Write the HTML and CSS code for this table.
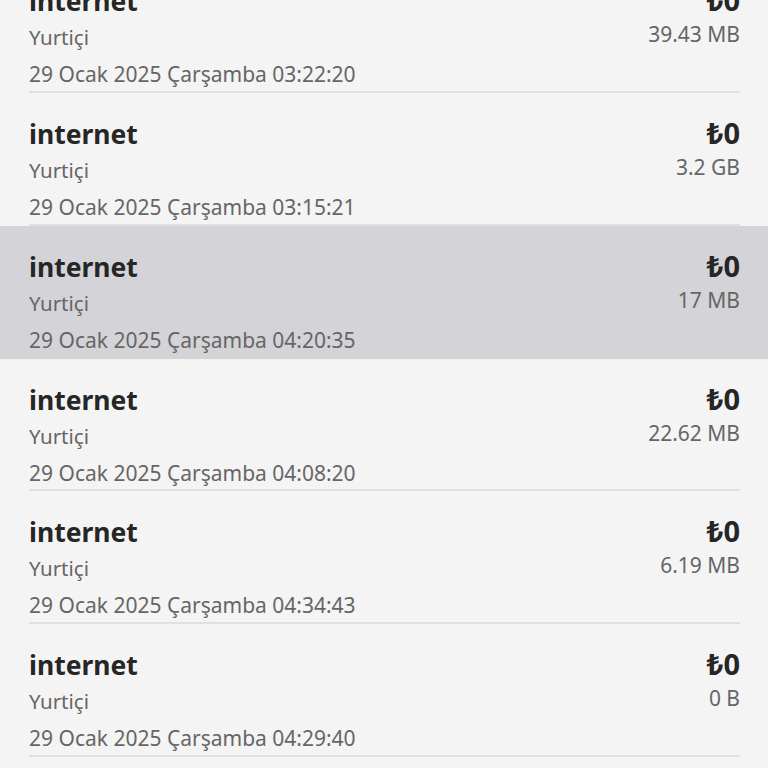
FILE: index.html
```html
<!DOCTYPE html>
<html lang="tr">
<head>
<meta charset="utf-8">
<link rel="stylesheet" href="styles.css">
</head>
<body>
<div class="list">
  <div class="row"><div class="inner">
    <div class="left"><div class="title">internet</div><div class="sub">Yurtiçi</div><div class="date">29 Ocak 2025 Çarşamba 03:22:20</div></div>
    <div class="right"><div class="amount">₺0</div><div class="size">39.43 MB</div></div>
  </div></div>
  <div class="row"><div class="inner">
    <div class="left"><div class="title">internet</div><div class="sub">Yurtiçi</div><div class="date">29 Ocak 2025 Çarşamba 03:15:21</div></div>
    <div class="right"><div class="amount">₺0</div><div class="size">3.2 GB</div></div>
  </div></div>
  <div class="row active"><div class="inner">
    <div class="left"><div class="title">internet</div><div class="sub">Yurtiçi</div><div class="date">29 Ocak 2025 Çarşamba 04:20:35</div></div>
    <div class="right"><div class="amount">₺0</div><div class="size">17 MB</div></div>
  </div></div>
  <div class="row"><div class="inner">
    <div class="left"><div class="title">internet</div><div class="sub">Yurtiçi</div><div class="date">29 Ocak 2025 Çarşamba 04:08:20</div></div>
    <div class="right"><div class="amount">₺0</div><div class="size">22.62 MB</div></div>
  </div></div>
  <div class="row"><div class="inner">
    <div class="left"><div class="title">internet</div><div class="sub">Yurtiçi</div><div class="date">29 Ocak 2025 Çarşamba 04:34:43</div></div>
    <div class="right"><div class="amount">₺0</div><div class="size">6.19 MB</div></div>
  </div></div>
  <div class="row"><div class="inner">
    <div class="left"><div class="title">internet</div><div class="sub">Yurtiçi</div><div class="date">29 Ocak 2025 Çarşamba 04:29:40</div></div>
    <div class="right"><div class="amount">₺0</div><div class="size">0 B</div></div>
  </div></div>
</div>
</body>
</html>
```
FILE: styles.css
```css
html, body {
  margin: 0;
  padding: 0;
  background: #f4f4f4;
  font-family: "Noto Sans", "DejaVu Sans", sans-serif;
  overflow: hidden;
}
.list {
  margin-top: -39.8px;
}
.row {
  height: 132.8px;
  box-sizing: border-box;
}
.row.active {
  background: #d4d3d7;
}
.inner {
  margin: 0 28px 0 29px;
  height: 100%;
  box-sizing: border-box;
  border-bottom: 2px solid #e0e0e0;
  display: flex;
  justify-content: space-between;
  padding-top: 23px;
}
.row.active .inner {
  border-bottom-color: transparent;
}
.title {
  font-size: 26.5px;
  font-weight: 700;
  color: #262626;
  line-height: 36px;
}
.sub, .date {
  font-size: 20.5px;
  color: #666;
  line-height: 36px;
}
.date {
  font-size: 21px;
  line-height: 38px;
}
.right {
  text-align: right;
}
.amount {
  font-size: 29px;
  font-weight: 700;
  color: #262626;
  line-height: 34px;
}
.size {
  font-size: 21px;
  color: #666;
  line-height: 34px;
}
```
